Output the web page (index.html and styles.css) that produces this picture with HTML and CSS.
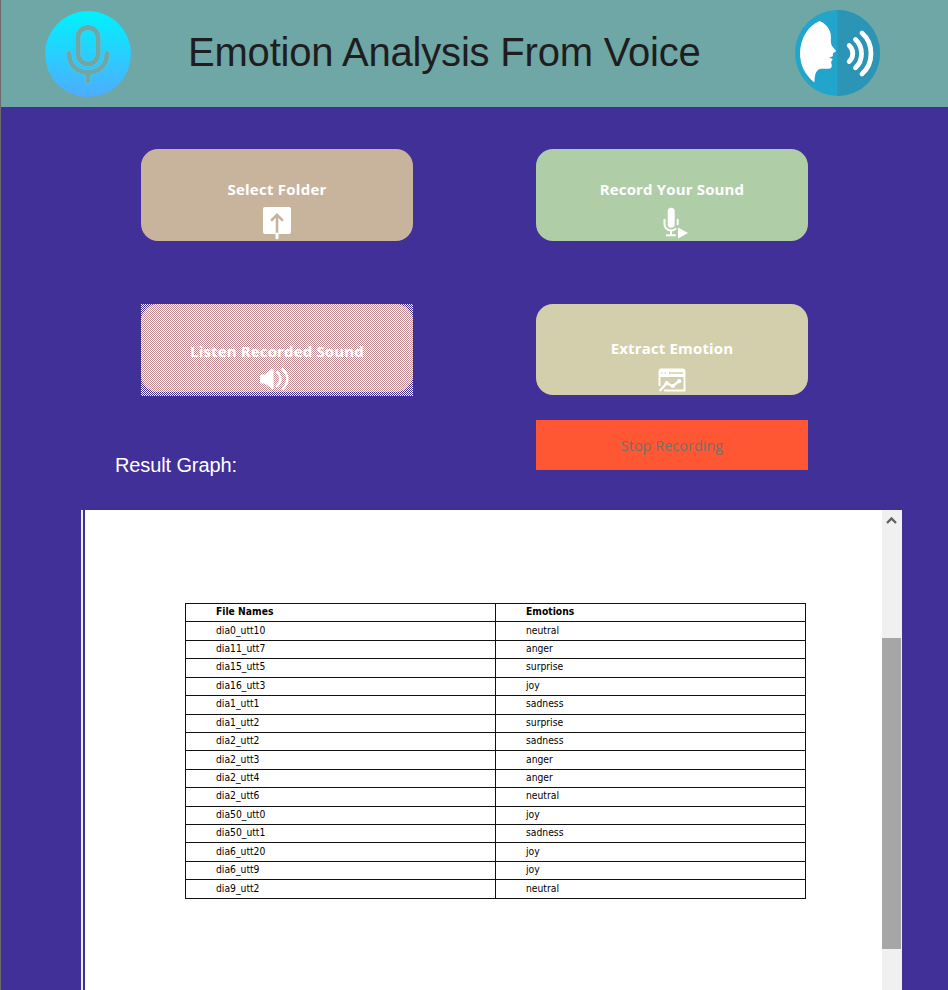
FILE: index.html
```html
<!DOCTYPE html>
<html lang="en">
<head>
<meta charset="utf-8">
<title>Emotion Analysis From Voice</title>
<link rel="stylesheet" href="styles.css">
</head>
<body>
<div class="window">
  <header class="header">
    <svg class="logo-mic" width="88" height="88" viewBox="0 0 88 88">
      <defs><linearGradient id="sky" x1="0" y1="0" x2="0" y2="1"><stop offset="0" stop-color="#00f2fe"/><stop offset="1" stop-color="#4facfe"/></linearGradient></defs>
      <circle cx="44" cy="44" r="43" fill="url(#sky)"/>
      <g fill="none" stroke="#51d0ef" stroke-width="5.8" stroke-linecap="round">
        <rect x="34" y="17.500" width="20" height="36.500" rx="10"/>
        <path d="M25 43.500C25 55 33 62.400 44 62.400S63 55 63 43.500M44 62V71"/>
      </g>
      <g fill="none" stroke="#6fa6a6" stroke-width="4.800" stroke-linecap="round">
        <rect x="34" y="17.500" width="20" height="36.500" rx="10"/>
        <path d="M25 43.500C25 55 33 62.400 44 62.400S63 55 63 43.500M44 62V71"/>
      </g>
    </svg>
    <h1 class="title">Emotion Analysis From Voice</h1>
    <svg class="logo-voice" width="86" height="88" viewBox="0 0 86 88">
      <ellipse cx="42.500" cy="44" rx="42.500" ry="43" fill="#22a5cb"/>
      <path d="M42.500 1A42.500 43 0 0 1 42.500 87Z" fill="#2c94b5"/>
      <path d="M24.500 12C30 14 34.500 19 35.700 25C36.400 29 35.200 33 36.500 36C37.700 38.500 40.500 40.500 41 42C40.800 43.500 38.500 43.300 38 44.400C37.500 45.700 38.300 46.600 37.700 47.300L34 48.800L37.300 49.800C38 51 36.500 52 36 53C36.500 55 37.500 57 36 59C33 61 26 58.500 23 61C19.500 64 20 68.500 19.300 73.500C9 65 5 55 5 44C5.500 29 13 17 24.500 12Z" fill="#fff"/>
      <g fill="none" stroke="#fff" stroke-width="4.800" stroke-linecap="round">
        <path d="M54.200 36.500C59 41 59 48 54.200 52.500"/>
        <path d="M60.500 30.500C68.500 38 68.500 51.500 60.500 58.700"/>
        <path d="M67 24C79 34.500 79 54.500 67 65"/>
      </g>
    </svg>
  </header>

  <main class="main">
    <section class="controls">
      <div class="column column-left">
        <button class="card card-folder">
          <span class="label label-folder">Select Folder</span>
          <svg class="icon-folder" width="30" height="34" viewBox="0 0 30 34">
            <rect x="1" y="1" width="28" height="27" rx="2" fill="#fff"/>
            <path d="M15 28V9M9.800 14L15 8.800L20.200 14" fill="none" stroke="#c8b49d" stroke-width="2.500" stroke-linecap="round"/>
            <path d="M15 28V31.800" stroke="#fff" stroke-width="3" stroke-linecap="round"/>
          </svg>
        </button>
        <button class="card card-listen" disabled>
          <span class="label label-listen">Listen Recorded Sound</span>
          <svg class="icon-listen" width="30" height="24" viewBox="0 0 30 24">
            <path d="M1 9.500Q1 7.500 3 7.500H6L13 2Q14.500 1.300 14.500 3V21Q14.500 22.500 13 21.700L6 16.500H3Q1 16.500 1 14.500Z" fill="#fff"/>
            <path d="M18 5C22.500 9 22.500 15 18 19M23.500 2C30 8 30 16 23.500 22" fill="none" stroke="#fff" stroke-width="2.400" stroke-linecap="round"/>
          </svg>
          <svg class="stipple" width="272" height="92" shape-rendering="crispEdges">
            <defs><pattern id="dots" width="2" height="2" patternUnits="userSpaceOnUse"><rect width="1" height="1" fill="#fff"/><rect x="1" y="1" width="1" height="1" fill="#fff"/></pattern></defs>
            <rect width="272" height="92" fill="url(#dots)"/>
          </svg>
        </button>
        <h2 class="result-title">Result Graph:</h2>
      </div>
      <div class="column">
        <button class="card card-record">
          <span class="label label-record">Record Your Sound</span>
          <svg class="icon-record" width="28" height="34" viewBox="0 0 28 34">
            <rect x="7.700" y="1.800" width="7" height="20" rx="3.500" fill="#fff"/>
            <path d="M4.500 13.800V18C4.500 22 7.500 24.500 11 24.500C13 24.500 14.500 24 15.500 23M17.700 13.800V18.300M11 24.500V29M6.800 29.200H15" fill="none" stroke="#fff" stroke-width="2" stroke-linecap="round"/>
            <path d="M18 21.500V32.500L28 27Z" fill="#fff"/>
          </svg>
        </button>
        <button class="card card-extract">
          <span class="label label-extract">Extract Emotion</span>
          <svg class="icon-extract" width="28" height="24" viewBox="0 0 28 24">
            <path d="M1.500 18V3Q1.500 1.500 3 1.500H25Q26.500 1.500 26.500 3V22.500H6M1.500 8H26.500" fill="none" stroke="#fff" stroke-width="1.900"/>
            <path d="M2 5H26" stroke="#fff" stroke-width="6"/>
            <path d="M3.300 5h1.300M6.700 5h1.300M11 5H25" stroke="#d3cfac" stroke-width="1.300"/>
            <path d="M1.500 23L8.800 15.200L14.600 18.200L21 13.200" fill="none" stroke="#fff" stroke-width="2.400"/>
            <g fill="#fff"><circle cx="8.800" cy="15.200" r="2.100"/><circle cx="14.800" cy="18" r="2.100"/><circle cx="21.200" cy="13.200" r="2.100"/></g>
          </svg>
        </button>
        <button class="stop">Stop Recording</button>
      </div>
    </section>

    <section class="viewer">
      <div class="page">
        <table class="results">
          <tr><th>File Names</th><th>Emotions</th></tr>
          <tr><td>dia0_utt10</td><td>neutral</td></tr>
          <tr><td>dia11_utt7</td><td>anger</td></tr>
          <tr><td>dia15_utt5</td><td>surprise</td></tr>
          <tr><td>dia16_utt3</td><td>joy</td></tr>
          <tr><td>dia1_utt1</td><td>sadness</td></tr>
          <tr><td>dia1_utt2</td><td>surprise</td></tr>
          <tr><td>dia2_utt2</td><td>sadness</td></tr>
          <tr><td>dia2_utt3</td><td>anger</td></tr>
          <tr><td>dia2_utt4</td><td>anger</td></tr>
          <tr><td>dia2_utt6</td><td>neutral</td></tr>
          <tr><td>dia50_utt0</td><td>joy</td></tr>
          <tr><td>dia50_utt1</td><td>sadness</td></tr>
          <tr><td>dia6_utt20</td><td>joy</td></tr>
          <tr><td>dia6_utt9</td><td>joy</td></tr>
          <tr><td>dia9_utt2</td><td>neutral</td></tr>
        </table>
      </div>
      <div class="scrollbar">
        <svg class="arrow" width="19" height="20" viewBox="0 0 19 20"><path d="M5 13L9.500 8.500L14 13" fill="none" stroke="#606060" stroke-width="2.300"/></svg>
        <div class="thumb"></div>
      </div>
    </section>
  </main>
</div>
</body>
</html>
```
FILE: styles.css
```css
* { box-sizing: border-box; }

body { margin: 0; }

.window {
  height: 990px;
  overflow: hidden;
  display: flex;
  flex-direction: column;
  border-left: 1px solid #6c6c6c;
  background: #403098;
  font-family: "Liberation Sans", sans-serif;
}

.header {
  height: 107px;
  flex: none;
  display: flex;
  align-items: center;
  padding: 0 67px 0 43px;
  background: #6fa6a6;
}

.title {
  margin: 0 auto 3px 56px;
  font-size: 40px;
  line-height: 46px;
  font-weight: 400;
  letter-spacing: -0.2px;
  color: #1e1e1e;
  white-space: nowrap;
}

.logo-voice { margin-bottom: 1px; }

.main { flex: 1; display: flex; flex-direction: column; }

.controls {
  height: 403px;
  flex: none;
  display: flex;
  gap: 123px;
  padding: 42px 0 0 140px;
}

.column { width: 272px; display: flex; flex-direction: column; }

.card {
  height: 92px;
  flex: none;
  display: flex;
  flex-direction: column;
  align-items: center;
  justify-content: flex-start;
  margin: 0 0 63px;
  padding: 30px 0 0;
  border: 0;
  border-radius: 17px;
  color: #fff;
}

.label {
  height: 21px;
  margin-bottom: 5px;
  font: 700 15px/21px "Open Sans", sans-serif;
  letter-spacing: 0.15px;
  white-space: nowrap;
}

.label-folder { letter-spacing: 0.25px; }

.icon-folder { margin-top: 1px; }
.icon-record { margin: 1px 0 0 4px; }
.icon-listen { margin: 0 6px 0 0; }
.icon-extract { margin-right: 1px; }

.card-folder { background: #c8b49d; }
.card-record { background: #afcea7; }

.card-listen {
  position: relative;
  height: 88px;
  margin-bottom: 61px;
  padding-top: 37px;
  background: #c28a91;
}

/* disabled stipple */
.stipple {
  position: absolute;
  top: 0;
  left: 0;
}

.card-extract {
  height: 91px;
  margin-bottom: 25px;
  padding-top: 34px;
  background: #d3cfac;
}

.label-extract { margin-bottom: 9px; }

.stop {
  height: 50px;
  padding: 1px 0 0;
  border: 0;
  background: #ff5733;
  color: #787068;
  font: 400 14.500px/20px "Open Sans", sans-serif;
}

.result-title {
  margin: 1px 0 0 -26px;
  font-size: 20px;
  line-height: 23px;
  font-weight: 400;
  letter-spacing: -0.12px;
  color: #fff;
}

.viewer {
  width: 821px;
  flex: 1;
  display: flex;
  margin-left: 80px;
  border-left: 2px solid #f0f0f0;
}

.page {
  width: 797px;
  margin-left: 2px;
  padding: 93px 0 0 100px;
  background: #fff;
}

.results {
  width: 621px;
  table-layout: fixed;
  border-collapse: collapse;
  font: 10.250px/12px "DejaVu Sans Condensed", "DejaVu Sans", sans-serif;
  font-stretch: condensed;
  color: #000;
}

.results th,
.results td {
  height: 18.430px;
  padding: 0 0 3px 30px;
  border: 1px solid #111;
  text-align: left;
}

.scrollbar {
  width: 20px;
  display: flex;
  flex-direction: column;
  background: #f0f0f0;
}

.thumb { width: 19px; height: 311px; margin-top: 108px; background: #a6a6a6; }
```
